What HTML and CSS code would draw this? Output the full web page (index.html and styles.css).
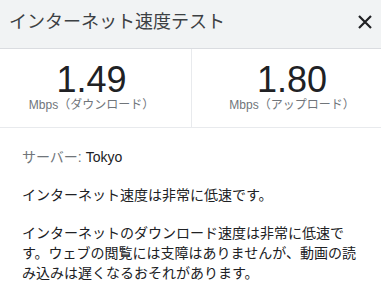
FILE: index.html
```html
<!DOCTYPE html>
<html lang="ja">
<head>
<meta charset="utf-8">
<link rel="stylesheet" href="styles.css">
</head>
<body>
<div class="card">
  <div class="header">
    <span class="title">インターネット速度テスト</span>
    <svg class="close" width="14" height="14" viewBox="0 0 14 14"><path d="M1 1L13 13M13 1L1 13" stroke="#202124" stroke-width="2.2" fill="none"/></svg>
  </div>
  <div class="stats">
    <div class="stat stat-left">
      <div class="num">1.49</div>
      <div class="unit">Mbps（ダウンロード）</div>
    </div>
    <div class="stat stat-right">
      <div class="num">1.80</div>
      <div class="unit">Mbps（アップロード）</div>
    </div>
  </div>
  <div class="body">
    <p class="server"><span class="label">サーバー: </span>Tokyo</p>
    <p>インターネット速度は非常に低速です。</p>
    <p>インターネットのダウンロード速度は非常に低速です。ウェブの閲覧には支障はありませんが、動画の読み込みは遅くなるおそれがあります。</p>
  </div>
</div>
</body>
</html>
```
FILE: styles.css
```css
html, body {
  margin: 0;
  padding: 0;
  background: #ffffff;
}
body {
  font-family: "Liberation Sans", Arial, "Noto Sans CJK JP", sans-serif;
  color: #202124;
  width: 381px;
  height: 289px;
  overflow: hidden;
}
.card {
  width: 381px;
}
.header {
  height: 48px;
  background: #f1f3f4;
  border-bottom: 1px solid #dadce0;
  display: flex;
  align-items: center;
  justify-content: space-between;
  padding: 0 9px 0 9px;
  box-sizing: content-box;
}
.title {
  font-size: 18px;
  line-height: 24px;
  color: #3c4043;
  margin-top: -5px;
}
.close {
  margin-top: -5px;
}
.stats {
  display: grid;
  grid-template-columns: 192px 1fr;
  border-bottom: 1px solid #e8eaed;
}
.stat {
  text-align: center;
  padding: 13px 0 14px;
}
.stat-left {
  padding-right: 8px;
  border-right: 1px solid #e8eaed;
}
.stat-right {
  padding-left: 11px;
}
.num {
  font-size: 36px;
  line-height: 35px;
  color: #202124;
}
.unit {
  font-size: 12px;
  line-height: 16px;
  color: #70757a;
}
.body {
  padding: 0 22px;
}
.body p {
  margin: 18px 0 0;
  font-size: 14px;
  line-height: 20px;
}
.body p.server {
  margin-top: 19px;
}
.label {
  color: #70757a;
}
```
